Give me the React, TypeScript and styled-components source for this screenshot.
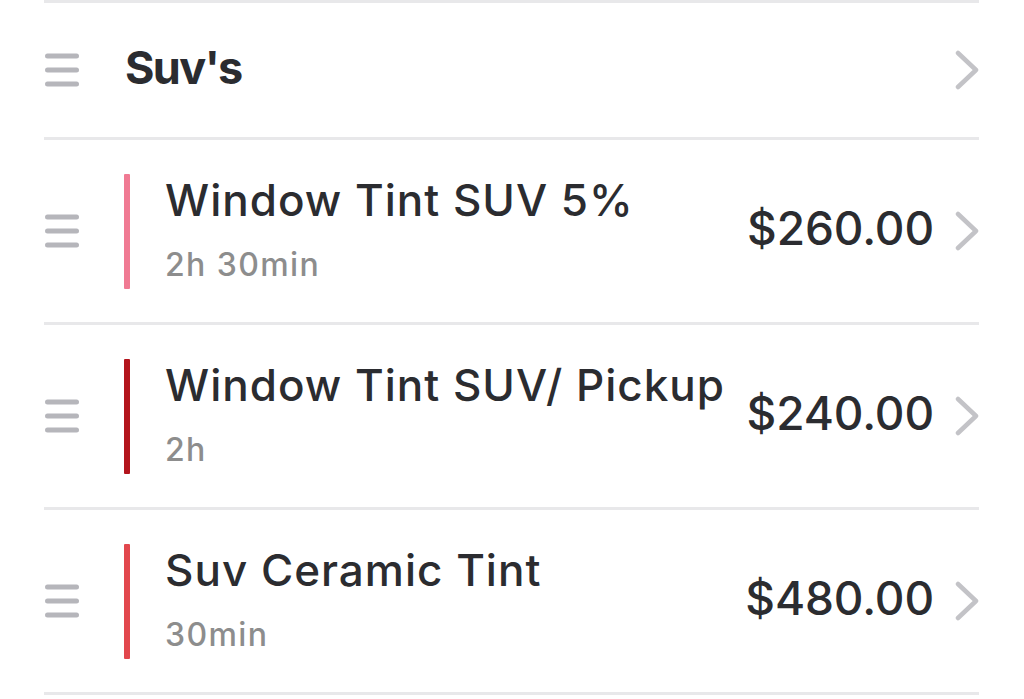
import styled, { createGlobalStyle } from "styled-components";

const GlobalStyle = createGlobalStyle`
  html, body {
    margin: 0;
    padding: 0;
    background: #ffffff;
  }
  body {
    font-family: Inter, Lato, "Noto Sans", sans-serif;
    color: #2b2c30;
    -webkit-font-smoothing: antialiased;
  }
`;

const List = styled.div`
  width: 935px;
  margin-left: 44px;
  border-top: 3px solid #e8e8ea;
`;

const HeaderRow = styled.div`
  height: 134px;
  display: flex;
  align-items: center;
  border-bottom: 3px solid #e8e8ea;
`;

const Row = styled.div`
  height: 182px;
  display: flex;
  align-items: center;
  border-bottom: 3px solid #e8e8ea;
`;

const HandleCell = styled.div`
  width: 80px;
  flex-shrink: 0;
  display: flex;
  align-items: center;
  padding-left: 1px;
  box-sizing: border-box;
`;

const CategoryTitle = styled.div`
  flex: 1;
  padding-left: 1px;
  font-size: 45px;
  font-weight: 700;
  letter-spacing: -1.6px;
  margin-top: -6px;
`;

const ColorBar = styled.div<{ $color: string }>`
  width: 6px;
  height: 115px;
  flex-shrink: 0;
  border-radius: 1px;
  background: ${(p) => p.$color};
`;

const Info = styled.div`
  flex: 1;
  min-width: 0;
  margin-left: 35px;
  display: flex;
  flex-direction: column;
  margin-top: -6px;
`;

const ServiceName = styled.div`
  font-size: 44px;
  line-height: 56px;
  font-weight: 500;
  letter-spacing: 1px;
  white-space: nowrap;
`;

const Duration = styled.div`
  font-size: 32px;
  line-height: 40px;
  margin-top: 17px;
  letter-spacing: 1.4px;
  color: #8d8d8d;
  font-weight: 500;
`;

const Price = styled.div`
  font-size: 46px;
  font-weight: 500;
  letter-spacing: -0.1px;
  white-space: nowrap;
  margin-top: -7px;
`;

const ChevronCell = styled.div`
  width: 24px;
  margin-left: 21px;
  flex-shrink: 0;
  display: flex;
  justify-content: flex-end;
  align-items: center;
`;

const Handle = () => (
  <svg width="34" height="34" viewBox="0 0 34 34">
    <g stroke="#b6b6bb" strokeWidth="5" strokeLinecap="round">
      <line x1="2.5" y1="3" x2="31.5" y2="3" />
      <line x1="2.5" y1="17" x2="31.5" y2="17" />
      <line x1="2.5" y1="31" x2="31.5" y2="31" />
    </g>
  </svg>
);

const Chevron = () => (
  <svg width="24" height="40" viewBox="0 0 24 40">
    <polyline
      points="3,3 21,20 3,37"
      fill="none"
      stroke="#c3c3c7"
      strokeWidth="4.5"
      strokeLinecap="round"
      strokeLinejoin="round"
    />
  </svg>
);

const services = [
  { name: "Window Tint SUV 5%", duration: "2h 30min", price: "$260.00", color: "#f07a93" },
  { name: "Window Tint SUV/ Pickup", duration: "2h", price: "$240.00", color: "#b3151d" },
  { name: "Suv Ceramic Tint", duration: "30min", price: "$480.00", color: "#e2474d" },
];

export default function App() {
  return (
    <>
      <GlobalStyle />
      <List>
        <HeaderRow>
          <HandleCell>
            <Handle />
          </HandleCell>
          <CategoryTitle>Suv's</CategoryTitle>
          <ChevronCell>
            <Chevron />
          </ChevronCell>
        </HeaderRow>
        {services.map((s) => (
          <Row key={s.name}>
            <HandleCell>
              <Handle />
            </HandleCell>
            <ColorBar $color={s.color} />
            <Info>
              <ServiceName>{s.name}</ServiceName>
              <Duration>{s.duration}</Duration>
            </Info>
            <Price>{s.price}</Price>
            <ChevronCell>
              <Chevron />
            </ChevronCell>
          </Row>
        ))}
      </List>
    </>
  );
}
